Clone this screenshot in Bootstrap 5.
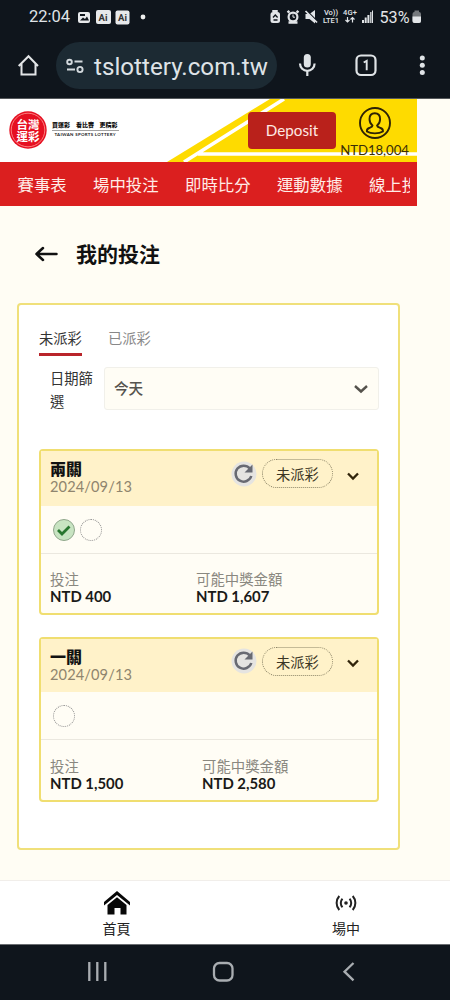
<!DOCTYPE html>
<html lang="zh-Hant">
<head>
<meta charset="utf-8">
<meta name="viewport" content="width=device-width, initial-scale=1">
<title>我的投注</title>
<link href="https://cdn.jsdelivr.net/npm/bootstrap@5.3.0/dist/css/bootstrap.min.css" rel="stylesheet">
<style>
body{font-family:Lato,"Noto Sans CJK TC",sans-serif;background:#fffdf4;color:#1d1d1b;width:450px;height:1000px;overflow:hidden}
svg{display:block;flex:none}
.phone{height:1000px}
.sys{background:#0f151c;color:#dfe3e7;font-family:Roboto,sans-serif}
.sys-status{height:33px;padding-left:29px}
.clock{font-size:16.5px;line-height:33px;width:48px}
.sys-url{height:66px;border-bottom:1px solid #55585b;padding-top:9px}
.url-pill{width:221px;height:47px;margin-left:17px;background:#1c2a33;font-size:24.2px;line-height:42px;white-space:nowrap}
.site-head{width:417px;height:63px;background:#fff}
.slope{position:absolute;inset:0}
.deposit{width:88px;height:37px;background:#b9211b;color:#ffe9e3;font-size:15.2px;border:0;border-radius:4px;padding:0;margin-top:13px}
.account{width:77px;padding-top:7px}
.balance{font-size:13.2px;line-height:16px;margin-top:2px;white-space:nowrap;letter-spacing:-.05px;color:#3a2e08}
.site-nav{width:417px;height:43.5px;background:#db1f1f;padding:0 7px 0 17.5px}
.nav-strip{gap:26.4px;height:43px;overflow:hidden;white-space:nowrap;color:#ffece7;font-size:16.4px;line-height:45px;flex-wrap:nowrap}
.page-title{height:97.5px;padding-left:35px}
.page-title h1{font-size:21px;line-height:30px;margin:0 0 0 18px;color:#111}
.bets{width:382.5px;height:547px;margin-left:17.4px;border:2px solid #f0e07a;border-radius:4px;background:#fff;padding:23px 19px 0 19.6px}
.tabs{gap:26px;font-size:14.3px;line-height:22px;height:30px}
.tabs a{color:#888;text-decoration:none;height:28px}
.tabs a.on{color:#333;border-bottom:3px solid #b9242a}
.filter-row{margin-top:9px;height:45px;font-size:14.3px;line-height:22.5px;color:#333}
.filter-label{width:54px;margin-left:11px;padding-top:1px}
.day{width:275px;height:43px;border:1px solid #f1f0ea;border-radius:3px;background:#fffdf5;color:#55534e;font-size:14.6px;padding:1px 10px 0 9px;font-weight:500}
.ticket{width:340px;border:2px solid #f0de70;border-radius:4px;background:#fffdf5;height:166px}
.ticket-head{background:#fff2c9;height:55px;padding:8px 0 0 9px}
.ticket-head h2{font-size:16px;line-height:20px;font-weight:900;margin:0;color:#111}
.ticket-head .date{font-size:14.6px;line-height:16px;color:#8f856e;letter-spacing:.12px}
.pend{width:71px;height:29px;border:1px dotted #8b8467;border-radius:15px;font-size:14.3px;line-height:29px;color:#3a3524;text-align:center;margin:0 14px 0 5px}
.legs{height:48px;border-bottom:1px solid #ebe8df;padding-left:12px;gap:5px}
.leg{width:22px;height:22px;border:1px dotted #8d8d8d;border-radius:50%}
.sums{padding:18px 9px 0;line-height:16px;font-size:14.4px;color:#8a8880}
.sums b{display:block;color:#1a1a18;font-size:14.9px;line-height:17px;white-space:nowrap}
.second{height:165px;margin-top:22px}
.second .sums{padding-top:19px}
.tabbar{height:64px;margin-top:auto;background:#fff;border-top:1px solid #f1eeea;font-size:14px;color:#222}
.tabbar a{color:inherit;text-decoration:none;line-height:18px}
.android{height:56px;border-top:1px solid #6a6d71}
</style>
</head>
<body>
<div class="phone d-flex flex-column">
  <div class="sys sys-status d-flex align-items-center">
    <span class="clock">22:04</span>
    <svg width="80" height="18" viewBox="0 0 80 18">
      <rect x="1" y="4" width="12" height="11" rx="2" fill="#e7e9eb"/><path d="M3 12.500l3-3 2 1.500 2-2.500 2 4zM3 6h5v2H3z" fill="#0f151c"/>
      <rect x="19" y="2" width="15" height="14" rx="2" fill="#e7e9eb"/><text x="21.500" y="12.500" font-size="9.500" font-weight="700" fill="#333">Ai</text>
      <rect x="38.500" y="2.500" width="14" height="14" rx="2" fill="#e7e9eb"/><text x="41" y="13" font-size="9.500" font-weight="700" fill="#333">Ai</text>
      <circle cx="66" cy="9" r="2.400" fill="#eee"/>
    </svg>
    <svg class="ms-auto" width="184" height="22" viewBox="266 6 184 22" fill="#e2e5e8">
      <rect x="270.500" y="12" width="9.500" height="11" rx="2.500"/><rect x="272" y="10" width="6" height="2" rx="1"/><path d="M273 17.500l2.300-2.500 2.300 2.500M273.500 20h4" fill="none" stroke="#0f151c" stroke-width="1.300"/>
      <circle cx="293" cy="17" r="5.500"/><path d="M287.500 12.500l2-1.500M298.500 12.500l-2-1.500M288.500 22.500h9" stroke="#e2e5e8" stroke-width="2.500"/><circle cx="293" cy="17" r="3.300" fill="#0f151c"/><path d="M293 14.500v2.700h2" fill="none" stroke="#e2e5e8"/>
      <path d="M305.500 14h4l5.500-4v13.500l-5.500-4.500h-4z"/><path d="M306.500 10.500l10.500 10.500" stroke="#0f151c" stroke-width="1.500"/><path d="M305.500 11l11.500 11.500" stroke="#e2e5e8" stroke-width="1.700"/>
      <g font-size="7.500" font-weight="500"><text x="324" y="15.300" textLength="14">Vo))</text><text x="323" y="22.800" textLength="16">LTE1</text><text x="343" y="15.300" textLength="14">4G+</text></g>
      <path d="M347.500 17v5m-2-2l2 2 2-2M352.500 22.500v-5m-2 2l2-2 2 2" fill="none" stroke="#e2e5e8" stroke-width="1.200"/>
      <path d="M362 20h2v3h-2zM364.700 17.500h2V23h-2zM367.400 15h2v8h-2z"/><path d="M370.200 12h1.300v11h-1.300zM372 10.500h1V23h-1z"/>
      <text x="379.500" y="22.600" font-size="16" textLength="30" lengthAdjust="spacingAndGlyphs">53%</text>
      <rect x="412.500" y="12" width="8.500" height="11" rx="2" fill="#74787c"/><rect x="414.500" y="10.500" width="4.500" height="2" fill="#74787c"/><path d="M412.500 16.500h8.500V21a2 2 0 0 1-2 2h-4.500a2 2 0 0 1-2-2z"/>
    </svg>
  </div>
  <div class="sys sys-url d-flex">
    <svg width="22" height="24" viewBox="0 0 22 24" style="margin:12px 0 0 17px" fill="none" stroke="#e3e5e7" stroke-width="2"><path d="M4.500 10v10.500h14V10M1.700 12L11.500 2.200 21 12"/></svg>
    <div class="url-pill rounded-pill d-flex">
      <svg width="20" height="16" viewBox="0 0 20 16" style="margin:16px 8px 0 10px" fill="none" stroke="#d3d9dd" stroke-width="1.900"><circle cx="3.500" cy="4" r="2.300"/><path d="M8.500 3.500h8M1 11.500h8"/><circle cx="14" cy="11.500" r="2.600"/></svg>
      <span class="pt-1">tslottery.com.tw</span>
    </div>
    <svg width="173" height="47" viewBox="277 42 173 47" fill="none" stroke="#dfe3e6" stroke-width="2.200"><rect x="303.800" y="54" width="7" height="13.500" rx="3.500" fill="#dfe3e6" stroke="none"/><path d="M300 63.500a7.300 7.300 0 0 0 14.600 0M307.300 71v5"/><rect x="356.500" y="55.500" width="19" height="19.500" rx="4.500"/><path d="M363.700 62.500l3-1.700v9.500" stroke-width="1.900"/><g fill="#dfe3e6" stroke="none"><circle cx="422.300" cy="58" r="2.500"/><circle cx="422.300" cy="65.300" r="2.500"/><circle cx="422.300" cy="72.600" r="2.500"/></g></svg>
  </div>

  <header class="site-head position-relative flex-shrink-0">
    <svg class="slope" width="417" height="63" viewBox="0 0 417 63"><path d="M167 63L270 0h147v63z" fill="#fedb00"/><path d="M184 63L284 0M198 55h219" stroke="#fff" stroke-width="3.500" fill="none"/></svg>
    <div class="position-relative d-flex">
      <svg width="120" height="63" viewBox="0 0 120 63" style="margin-right:128px" font-family="Noto Sans CJK TC">
        <circle cx="28" cy="31" r="18.700" fill="#e60f21"/><circle cx="28" cy="31" r="16.800" fill="none" stroke="#ff9a96" stroke-width=".8"/>
        <g fill="#fff" font-size="11.500" font-weight="700"><text x="16.500" y="29.500">台灣</text><text x="16.500" y="41.800">運彩</text></g>
        <g fill="#111" font-size="6" font-weight="900"><text x="52" y="28.300" textLength="18">買運彩</text><text x="76" y="28.300" textLength="18">看比賽</text><text x="99.500" y="28.300" textLength="18">更精彩</text></g>
        <path d="M52 31.500h67" stroke="#777" stroke-width=".7"/><text x="54.500" y="37.300" font-family="Lato" font-size="4.400" font-weight="700" fill="#222" textLength="61">TAIWAN SPORTS LOTTERY</text>
      </svg>
      <button class="deposit">Deposit</button>
      <div class="account d-flex flex-column align-items-center">
        <svg width="34" height="34" viewBox="0 0 34 34" fill="none" stroke="#2d2205" stroke-width="1.900"><circle cx="17" cy="17" r="15"/><path d="M14.500 19.500c-2-1.500-3-3.500-3-6.500 0-3.600 2-5.800 5.300-5.800s5.300 2.200 5.300 5.800c0 3-1 5-3 6.500.2 1.500 1.500 1.700 3.500 2.500 1.800.7 2.600 1.600 2.300 3.500-4 2.500-12 2.500-16 0-.3-1.900.5-2.800 2.300-3.500 2-.8 3.300-1 3.300-2.500z"/></svg>
        <span class="balance">NTD18,004</span>
      </div>
    </div>
  </header>
  <nav class="site-nav flex-shrink-0"><div class="nav-strip d-flex"><span>賽事表</span><span>場中投注</span><span>即時比分</span><span>運動數據</span><span>線上投注</span></div></nav>

  <div class="page-title d-flex align-items-center flex-shrink-0">
    <svg width="23" height="18" viewBox="0 0 23 18" fill="none" stroke="#111" stroke-width="2.500" stroke-linecap="round" stroke-linejoin="round"><path d="M21.500 9H1.500M8 3L1.500 9 8 15"/></svg>
    <h1 class="fw-bold">我的投注</h1>
  </div>

  <main class="bets flex-shrink-0">
    <div class="tabs d-flex"><a class="on" href="#">未派彩</a><a href="#">已派彩</a></div>
    <div class="filter-row d-flex">
      <div class="filter-label">日期篩<br>選</div>
      <div class="day d-flex align-items-center justify-content-between"><span>今天</span><svg width="14" height="10" viewBox="0 0 14 10" fill="none" stroke="#55524c" stroke-width="2.400"><path d="M1 2l6 5.500L13 2"/></svg></div>
    </div>

    <section class="ticket" style="margin-top:37px">
      <div class="ticket-head d-flex">
        <div><h2>兩關</h2><div class="date">2024/09/13</div></div>
        <svg class="ms-auto" width="26" height="26" viewBox="0 0 26 26" style="margin-top:2px"><circle cx="13" cy="13" r="12.500" fill="#e5e4e1"/><path d="M18.800 7.500A8 8 0 1 0 20.300 15" fill="none" stroke="#686a72" stroke-width="2.500"/><path d="M21.500 3.500v8h-8z" fill="#686a72"/></svg>
        <div class="pend">未派彩</div>
        <svg width="12" height="9" viewBox="0 0 12 9" style="margin:13px 18px 0 0" fill="none" stroke="#30240a" stroke-width="2.300"><path d="M1 1.500L6 6.500l5-5"/></svg>
      </div>
      <div class="legs d-flex align-items-center">
        <svg width="22" height="22" viewBox="1 1 22 22"><circle cx="12" cy="12" r="10.500" fill="#c8e4c2" stroke="#8fa68b"/><path d="M6 12l4 4 7.500-7.500" fill="none" stroke="#28762f" stroke-width="2.800"/></svg>
        <span class="leg"></span>
      </div>
      <div class="sums d-flex"><div style="width:146px">投注<b>NTD 400</b></div><div>可能中獎金額<b>NTD 1,607</b></div></div>
    </section>

    <section class="ticket second">
      <div class="ticket-head d-flex" style="height:53px">
        <div><h2>一關</h2><div class="date">2024/09/13</div></div>
        <svg class="ms-auto" width="26" height="26" viewBox="0 0 26 26" style="margin-top:1px"><circle cx="13" cy="13" r="12.500" fill="#e5e4e1"/><path d="M18.800 7.500A8 8 0 1 0 20.300 15" fill="none" stroke="#686a72" stroke-width="2.500"/><path d="M21.500 3.500v8h-8z" fill="#686a72"/></svg>
        <div class="pend">未派彩</div>
        <svg width="12" height="9" viewBox="0 0 12 9" style="margin:12px 18px 0 0" fill="none" stroke="#30240a" stroke-width="2.300"><path d="M1 1.500L6 6.500l5-5"/></svg>
      </div>
      <div class="legs d-flex align-items-center"><span class="leg"></span></div>
      <div class="sums d-flex"><div style="width:152px">投注<b>NTD 1,500</b></div><div>可能中獎金額<b>NTD 2,580</b></div></div>
    </section>
  </main>

  <nav class="tabbar d-flex flex-shrink-0">
    <a href="#" class="d-flex flex-column align-items-center" style="width:233px"><svg width="28" height="26" viewBox="0 0 28 26" style="margin:9px 0 4px" fill="#080808"><path d="M1 12L14 1l13 11v3.500L14 5 1 15.500z"/><path d="M4.500 15L14 7.300l9.500 7.700v9.500h-6V18h-6v6.500h-7z"/></svg>首頁</a>
    <a href="#" class="d-flex flex-column align-items-center" style="width:217px"><svg width="22" height="20" viewBox="0 0 22 20" style="margin:12px 0 7px 9px" fill="none" stroke="#222" stroke-width="2"><circle cx="11" cy="10" r="1.800" fill="#222" stroke="none"/><path d="M7.500 5.800a6 6 0 0 0 0 8.400M14.500 5.800a6 6 0 0 1 0 8.400M4.300 3a10.500 10.500 0 0 0 0 14M17.700 3a10.500 10.500 0 0 1 0 14"/></svg><span style="margin-left:9px">場中</span></a>
  </nav>
  <div class="sys android flex-shrink-0">
    <svg width="450" height="55" viewBox="0 945 450 55" fill="none" stroke="#a9adb1" stroke-width="2.300"><path d="M89.300 962v19M97.300 962v19M105.300 962v19"/><rect x="214" y="963" width="18.500" height="17.500" rx="5.500"/><path d="M353.500 963l-9 8.700 9 8.700"/></svg>
  </div>
</div>
<script src="https://cdn.jsdelivr.net/npm/bootstrap@5.3.0/dist/js/bootstrap.bundle.min.js"></script>
</body>
</html>
